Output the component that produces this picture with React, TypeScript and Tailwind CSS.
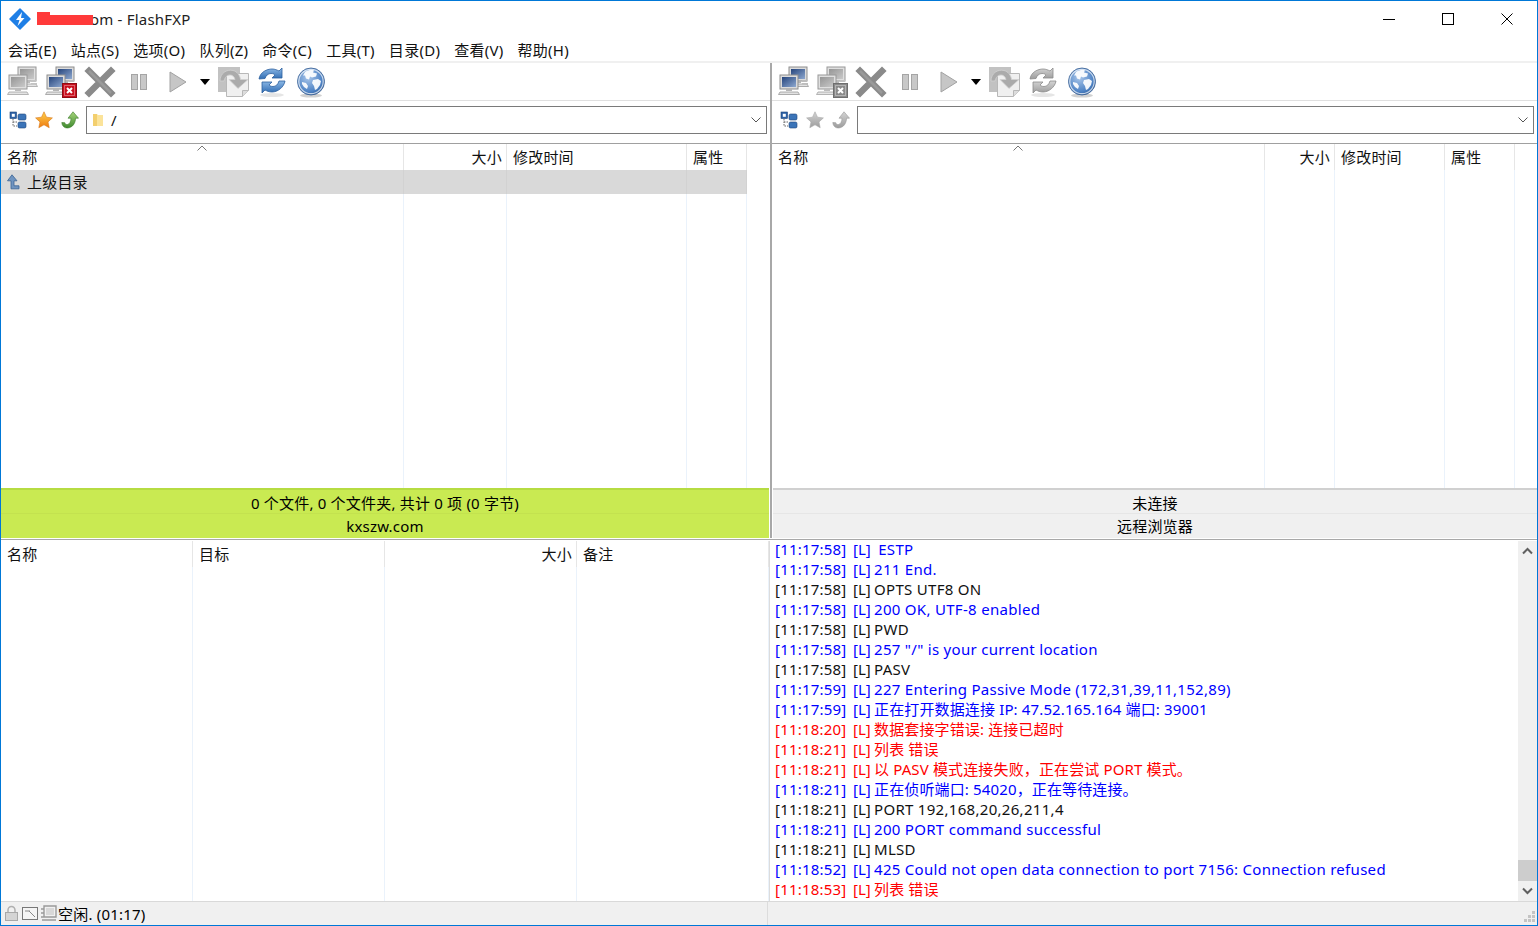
import React from "react";

const FONT = "font-['Noto_Sans','Noto_Sans_CJK_SC',sans-serif]";

function Defs() {
  return (
    <svg width="0" height="0" className="absolute">
      <defs>
        <linearGradient id="scr" x1="0" y1="0" x2="1" y2="1">
          <stop offset="0" stopColor="#25447c" />
          <stop offset="1" stopColor="#8fa9d0" />
        </linearGradient>
        <linearGradient id="scrg" x1="0" y1="0" x2="1" y2="1">
          <stop offset="0" stopColor="#8a8a8a" />
          <stop offset="1" stopColor="#c4c4c4" />
        </linearGradient>
        <radialGradient id="globe" cx="0.4" cy="0.35" r="0.75">
          <stop offset="0" stopColor="#a9c6ea" />
          <stop offset="0.7" stopColor="#4d82c4" />
          <stop offset="1" stopColor="#24508f" />
        </radialGradient>
        <linearGradient id="blueA" x1="0" y1="0" x2="0" y2="1">
          <stop offset="0" stopColor="#8db9e6" />
          <stop offset="1" stopColor="#2f6cb3" />
        </linearGradient>
        <linearGradient id="grayA" x1="0" y1="0" x2="0" y2="1">
          <stop offset="0" stopColor="#d4d4d4" />
          <stop offset="1" stopColor="#9c9c9c" />
        </linearGradient>
        <linearGradient id="starO" x1="0" y1="0" x2="0" y2="1">
          <stop offset="0" stopColor="#ffd34d" />
          <stop offset="1" stopColor="#ee7a10" />
        </linearGradient>
        <linearGradient id="greenA" x1="0" y1="0" x2="0" y2="1">
          <stop offset="0" stopColor="#a5d47a" />
          <stop offset="1" stopColor="#3f8a2e" />
        </linearGradient>
      </defs>
    </svg>
  );
}

function Monitor({ x, y, color }: { x: number; y: number; color: boolean }) {
  return (
    <g transform={`translate(${x} ${y})`}>
      <rect x="0" y="0" width="18" height="14" fill="#dcdcdc" stroke="#8e8e8e" />
      <rect x="2" y="2" width="14" height="10" fill={color ? "url(#scr)" : "url(#scrg)"} />
      <rect x="6" y="14" width="6" height="2" fill="#b5b5b5" />
      <path d="M0 17h18l1.500 2.500H-1.500z" fill="#e2e2e2" stroke="#9a9a9a" strokeWidth="0.8" />
    </g>
  );
}

function Computers({ color, badge }: { color: boolean; badge?: "red" | "gray" }) {
  return (
    <svg width="32" height="32" viewBox="0 0 32 32">
      <g opacity={color ? 1 : 0.9}>
        <Monitor x={11} y={1} color={color} />
        <path d="M24 14h5v2h-5zM24 17h6v1.500h-6z" fill="#bdbdbd" />
        <Monitor x={2} y={9} color={color} />
      </g>
      {badge && (
        <g>
          <rect x="17.500" y="17.500" width="14" height="14" fill={badge === "red" ? "#c9101e" : "#8a8a8a"} stroke={badge === "red" ? "#8e0c14" : "#6e6e6e"} />
          <rect x="19.500" y="19.500" width="10" height="10" fill="none" stroke="#fff" strokeOpacity="0.35" />
          <path d="M22 22l5 5M27 22l-5 5" stroke="#fff" strokeWidth="2" />
        </g>
      )}
    </svg>
  );
}

function BigX() {
  return (
    <svg width="32" height="32" viewBox="0 0 32 32">
      <path d="M5 5l22 22M27 5L5 27" stroke="#8a8a8a" strokeWidth="6.500" strokeLinecap="square" />
      <path d="M5 5l22 22" stroke="#9a9a9a" strokeWidth="2.500" />
    </svg>
  );
}

function Pause() {
  return (
    <svg width="18" height="18" viewBox="0 0 18 18">
      <rect x="1.500" y="1.500" width="6" height="15" fill="#c8c8c8" stroke="#a5a5a5" />
      <rect x="10.500" y="1.500" width="6" height="15" fill="#c8c8c8" stroke="#a5a5a5" />
    </svg>
  );
}

function Play() {
  return (
    <svg width="18" height="22" viewBox="0 0 18 22">
      <path d="M1 1l16 10L1 21z" fill="#c6c6c6" stroke="#a2a2a2" />
    </svg>
  );
}

function Caret() {
  return (
    <svg width="10" height="6" viewBox="0 0 10 6">
      <path d="M0 0h10L5 6z" fill="#000" />
    </svg>
  );
}

function Transfer() {
  return (
    <svg width="32" height="32" viewBox="0 0 32 32">
      <rect x="1" y="1" width="22" height="25" fill="#c2c2c2" />
      <path d="M9.500 7.500h22v17l-6 6h-16z" fill="#f0f0f0" stroke="#b8b8b8" />
      <path d="M31.500 24.500h-6v6" fill="#dcdcdc" stroke="#b8b8b8" />
      <path d="M3 15C3 7 10 3 16 4.500c4 1 7 4.500 7.500 9H31l-10 9-9-9h6c-.5-2.500-2.500-4.500-5-4.500-3 0-5 2-6 6z" fill="#ababab" stroke="#d2d2d2" strokeWidth="0.8" />
    </svg>
  );
}

function Refresh({ color }: { color: boolean }) {
  const fill = color ? "url(#blueA)" : "url(#grayA)";
  const st = color ? "#2c5f9e" : "#8a8a8a";
  return (
    <svg width="30" height="32" viewBox="0 0 30 32">
      <ellipse cx="15" cy="29" rx="12" ry="2" fill="#000" opacity="0.1" />
      <path d="M2 13C3 6 10 3 15 3c3 0 5 1 7 2l3-3v10H15l3-3c-1-1-2-1.500-4-1.500-3 0-5 2-6 5z" fill={fill} stroke={st} strokeWidth="0.8" />
      <path d="M28 15c-1 6-7 11-13 11-3 0-5-1-7-2l-3 3V16h10l-3 3c1 .8 2 1.500 4 1.500 3 0 5-2 6-5.500z" fill={fill} stroke={st} strokeWidth="0.8" />
    </svg>
  );
}

function Globe() {
  return (
    <svg width="30" height="32" viewBox="0 0 30 32" className="mt-[2px]">
      <ellipse cx="15" cy="28.500" rx="11" ry="2" fill="#000" opacity="0.18" />
      <circle cx="15" cy="14.500" r="13.500" fill="url(#globe)" stroke="#3a5f92" strokeWidth="0.8" />
      <circle cx="15" cy="14.500" r="12.200" fill="none" stroke="#fff" strokeOpacity="0.7" strokeWidth="1.200" />
      <path d="M9 5c3-2 7-2.500 9-1.500l-1 2 4 1-1 3-4 1-2-1-1 3-3-1-1-3-2 0zM17 13l5-1 3 2-1 4-3 4-2 1-1-4-2-3zM6 15l4 1 2 3-1 3-3-2-2-3z" fill="#fff" opacity="0.92" />
    </svg>
  );
}

function Tree() {
  return (
    <svg width="18" height="18" viewBox="0 0 18 18">
      <path d="M4 8v7h4M4 11h4" stroke="#666" strokeDasharray="1.500 1" fill="none" />
      <rect x="1" y="1" width="6.500" height="6.500" fill="#2d62a6" stroke="#1f4578" strokeWidth="0.6" />
      <rect x="2.800" y="2.800" width="3" height="3" fill="#fff" />
      <rect x="9" y="3" width="8" height="6" rx="1.500" fill="#3b74b8" stroke="#1f4578" strokeWidth="0.6" />
      <rect x="9" y="11" width="8" height="6" rx="1.500" fill="#3b74b8" stroke="#1f4578" strokeWidth="0.6" />
    </svg>
  );
}

function Star({ color }: { color: boolean }) {
  return (
    <svg width="18" height="18" viewBox="0 0 18 18">
      <path
        d="M9 .8l2.500 5.400 5.900.7-4.400 4 1.200 5.800L9 13.800l-5.200 2.900L5 10.900.6 6.900l5.900-.7z"
        fill={color ? "url(#starO)" : "url(#grayA)"}
        stroke={color ? "#d8791a" : "#aaa"}
        strokeWidth="0.6"
      />
    </svg>
  );
}

function BackArrow({ color }: { color: boolean }) {
  return (
    <svg width="18" height="18" viewBox="0 0 18 18">
      <path
        d="M12 .8l5.500 6.400h-3c0 5-3 9.500-8 9.800C3.500 17.100 1 15 .8 11.500l3 .2c.3 1.300 1.300 2 2.700 1.800 2-.3 3.500-3 3.500-6.300H7z"
        fill={color ? "url(#greenA)" : "url(#grayA)"}
        stroke={color ? "#3a7a2a" : "#999"}
        strokeWidth="0.6"
      />
    </svg>
  );
}

function Chevron({ className, color = "#555" }: { className?: string; color?: string }) {
  return (
    <svg width="10" height="6" viewBox="0 0 10 6" className={className}>
      <path d="M.5.5L5 5 9.500.5" fill="none" stroke={color} strokeWidth="1" />
    </svg>
  );
}

function Toolbar({ left }: { left: boolean }) {
  return (
    <div className="h-[38px] flex items-center border-b border-[#e0e0e0]">
      <div className="w-[3px]" />
      <div className="w-[38px] flex justify-center"><Computers color={!left} /></div>
      <div className="w-[37px] flex justify-center"><Computers color={left} badge={left ? "red" : "gray"} /></div>
      <div className="w-[42px] flex justify-center"><BigX /></div>
      <div className="w-[36px] flex justify-center"><Pause /></div>
      <div className="w-[42px] flex justify-center"><Play /></div>
      <div className="w-[12px] flex justify-center"><Caret /></div>
      <div className="w-[44px] flex justify-center"><Transfer /></div>
      <div className="w-[34px] flex justify-center"><Refresh color={left} /></div>
      <div className="w-[44px] flex justify-center"><Globe /></div>
    </div>
  );
}

function AddressBar({ left }: { left: boolean }) {
  return (
    <div className="h-[43px] flex items-center border-b border-[#a0a0a0] pr-[3px] pb-[4px]">
      <div className="w-[8px]" />
      <div className="w-[26px] flex"><Tree /></div>
      <div className="w-[26px] flex"><Star color={left} /></div>
      <div className="w-[25px] flex"><BackArrow color={left} /></div>
      <div className="flex-1 h-[28px] border border-[#7a7a7a] flex items-center pl-[6px] pr-[5px]">
        {left && (
          <>
            <svg width="11" height="14" viewBox="0 0 11 14" className="mr-[7px]">
              <path d="M0 1h4l1 1h5v11H0z" fill="#fbe39a" />
              <path d="M0 1h4v12H0z" fill="#f3cf6e" />
            </svg>
            <span>/</span>
          </>
        )}
        <Chevron className="ml-auto" />
      </div>
    </div>
  );
}

type Col = { w: number; title: string; right?: boolean; cell?: React.ReactNode };

function Columns({ cols, highlight }: { cols: Col[]; highlight?: boolean }) {
  return (
    <div className="flex-1 flex min-h-0 min-w-0">
      {cols.map((c, i) => (
        <div key={i} className="flex flex-col shrink-0" style={{ width: c.w }}>
          <div className={`h-[26px] flex items-center px-[6px] border-r border-[#e6e6e6] ${c.right ? "justify-end pr-[4px]" : ""}`}>
            {c.title}
          </div>
          {highlight && (
            <div className="h-[24px] bg-[#d9d9d9] flex items-center border-r border-[#d2d2d2] whitespace-nowrap">
              {c.cell}
            </div>
          )}
          <div className="flex-1 border-r border-[#eaf2fb]" />
        </div>
      ))}
    </div>
  );
}

function UpArrow() {
  return (
    <svg width="14" height="16" viewBox="0 0 14 16" className="ml-[5px] mr-[7px]">
      <path d="M6 .8l5 6H8v5h5v3H5V6.800H1.500z" fill="#6f94c0" stroke="#3a6394" strokeWidth="0.8" />
    </svg>
  );
}

function StatusPair({ green, a, b }: { green: boolean; a: string; b: string }) {
  return (
    <div className={`h-[50px] flex flex-col items-center border-t-2 ${green ? "bg-[#c9ea52] border-[#b6dc42]" : "bg-[#f0f0f0] border-[#d0d0d0]"}`}>
      <div className={`h-[24px] w-full flex items-center justify-center pt-[2px] border-b ${green ? "border-[#c3e24f]" : "border-[#e6e6e6]"}`}>{a}</div>
      <div className="flex-1 flex items-center justify-center">{b}</div>
    </div>
  );
}

const LOG: [string, string, string][] = [
  ["b", "[11:17:58]", " ESTP"],
  ["b", "[11:17:58]", "211 End."],
  ["k", "[11:17:58]", "OPTS UTF8 ON"],
  ["b", "[11:17:58]", "200 OK, UTF-8 enabled"],
  ["k", "[11:17:58]", "PWD"],
  ["b", "[11:17:58]", '257 "/" is your current location'],
  ["k", "[11:17:58]", "PASV"],
  ["b", "[11:17:59]", "227 Entering Passive Mode (172,31,39,11,152,89)"],
  ["b", "[11:17:59]", "正在打开数据连接 IP: 47.52.165.164 端口: 39001"],
  ["r", "[11:18:20]", "数据套接字错误: 连接已超时"],
  ["r", "[11:18:21]", "列表 错误"],
  ["r", "[11:18:21]", "以 PASV 模式连接失败，正在尝试 PORT 模式。"],
  ["b", "[11:18:21]", "正在侦听端口: 54020，正在等待连接。"],
  ["k", "[11:18:21]", "PORT 192,168,20,26,211,4"],
  ["b", "[11:18:21]", "200 PORT command successful"],
  ["k", "[11:18:21]", "MLSD"],
  ["b", "[11:18:52]", "425 Could not open data connection to port 7156: Connection refused"],
  ["r", "[11:18:53]", "列表 错误"],
];

const MENU = ["会话(E)", "站点(S)", "选项(O)", "队列(Z)", "命令(C)", "工具(T)", "目录(D)", "查看(V)", "帮助(H)"];

export default function App() {
  return (
    <div className={`w-[1538px] h-[926px] border border-[#0078d7] bg-white flex flex-col overflow-hidden text-[15px] leading-[20px] tracking-[0.2px] text-[#111] ${FONT}`}>
      <Defs />
      {/* title bar */}
      <div className="h-[37px] shrink-0 flex items-center pl-[8px] pb-[2px]">
        <svg width="22" height="22" viewBox="0 0 22 22">
          <path d="M11 1l10 10-10 10L1 11z" fill="#1f7fe6" stroke="#1f7fe6" strokeWidth="1.500" strokeLinejoin="round" />
          <path d="M13 4L7 12h3.500L8.500 18 15.500 10H12z" fill="#fff" />
        </svg>
        <span className="relative w-[56px] h-[10px] bg-[#ff3a3a] ml-[6px] mt-[3px] shrink-0">
          <span className="absolute left-0 top-[-3px] w-[13px] h-[3px] bg-[#ff3a3a]" />
        </span>
        <span className="ml-[-3px] text-[#222] whitespace-pre">om - FlashFXP</span>
        <div className="ml-auto flex items-center mr-[1px]">
          <div className="w-[59px] flex justify-center">
            <svg width="12" height="12" viewBox="0 0 12 12"><path d="M0 6.500h12" stroke="#000" /></svg>
          </div>
          <div className="w-[59px] flex justify-center">
            <svg width="12" height="12" viewBox="0 0 12 12"><rect x=".5" y=".5" width="11" height="11" fill="none" stroke="#000" /></svg>
          </div>
          <div className="w-[59px] flex justify-center">
            <svg width="12" height="12" viewBox="0 0 12 12"><path d="M.5.5l11 11M11.500.5l-11 11" stroke="#000" /></svg>
          </div>
        </div>
      </div>
      {/* menu */}
      <div className="h-[23px] shrink-0 flex items-center pl-[7px] gap-[14px] pt-[1px] whitespace-nowrap tracking-[0.27px]">
        {MENU.map((m) => (
          <span key={m}>{m}</span>
        ))}
      </div>
      <div className="h-[2px] shrink-0 bg-[#f0f0f0]" />
      {/* browsers */}
      <div className="h-[425px] shrink-0 flex">
        <div className="w-[769px] shrink-0 flex flex-col">
          <Toolbar left={true} />
          <AddressBar left={true} />
          <div className="relative flex-1 flex min-h-0">
            <Chevron className="absolute left-[196px] top-[1px] rotate-180" color="#777" />
            <Columns
              highlight
              cols={[
                { w: 403, title: "名称", cell: <><UpArrow /><span>上级目录</span></> },
                { w: 103, title: "大小", right: true },
                { w: 180, title: "修改时间" },
                { w: 60, title: "属性" },
              ]}
            />
          </div>
        </div>
        <div className="w-[2px] shrink-0 bg-[#a8a8a8]" />
        <div className="flex-1 min-w-0 flex flex-col">
          <Toolbar left={false} />
          <AddressBar left={false} />
          <div className="relative flex-1 flex min-h-0">
            <Chevron className="absolute left-[241px] top-[1px] rotate-180" color="#777" />
            <Columns
              cols={[
                { w: 493, title: "名称" },
                { w: 70, title: "大小", right: true },
                { w: 110, title: "修改时间" },
                { w: 70, title: "属性" },
              ]}
            />
          </div>
        </div>
      </div>
      {/* status pair */}
      <div className="h-[50px] shrink-0 flex">
        <div className="w-[768px] shrink-0 text-black"><StatusPair green a="0 个文件, 0 个文件夹, 共计 0 项 (0 字节)" b="kxszw.com" /></div>
        <div className="w-[1px] shrink-0 bg-white" />
        <div className="w-[2px] shrink-0 bg-[#a8a8a8]" />
        <div className="flex-1 min-w-0 text-black pl-[1px] bg-white"><StatusPair green={false} a="未连接" b="远程浏览器" /></div>
      </div>
      <div className="h-[3px] shrink-0 bg-[#a8a8a8] border-y border-white" />
      {/* queue + log */}
      <div className="flex-1 min-h-0 flex">
        <div className="w-[768px] shrink-0 flex border-r border-[#dcdcdc] box-content">
          <Columns
            cols={[
              { w: 192, title: "名称" },
              { w: 192, title: "目标" },
              { w: 192, title: "大小", right: true },
              { w: 192, title: "备注" },
            ]}
          />
        </div>
        <div className="flex-1 min-w-0 pl-[5px] overflow-hidden whitespace-pre -mt-[2px]">
          {LOG.map(([c, t, m], i) => (
            <div key={i} className={`h-[20px] flex ${c === "b" ? "text-[#0000ff]" : c === "r" ? "text-[#ff0000]" : "text-[#111]"}`}>
              <span className="w-[78px] shrink-0">{t}</span>
              <span className="w-[21px] shrink-0 tracking-[0px]">[L]</span>
              <span className={/[^\x00-\x7f]/.test(m) ? "tracking-[0.14px]" : "tracking-[0.3px]"}>{m}</span>
            </div>
          ))}
        </div>
        <div className="w-[19px] shrink-0 bg-[#f0f0f0] flex flex-col items-center">
          <div className="h-[20px] flex items-center justify-center">
            <svg width="11" height="8" viewBox="0 0 11 8"><path d="M1 6.500l4.500-4.500L10 6.500" fill="none" stroke="#606060" strokeWidth="2" /></svg>
          </div>
          <div className="flex-1" />
          <div className="w-full h-[21px] bg-[#cdcdcd]" />
          <div className="h-[20px] flex items-center justify-center">
            <svg width="11" height="8" viewBox="0 0 11 8"><path d="M1 1.500L5.500 6 10 1.500" fill="none" stroke="#606060" strokeWidth="2" /></svg>
          </div>
        </div>
      </div>
      {/* status bar */}
      <div className="h-[24px] shrink-0 bg-[#f0f0f0] border-t border-[#d9d9d9] flex items-center text-black">
        <div className="w-[767px] flex items-center border-r border-[#dcdcdc] h-full pl-[3px]">
          <svg width="15" height="17" viewBox="0 0 15 17">
            <path d="M4 8V5a3.500 3.500 0 017 0v3" fill="none" stroke="#b0b0b0" strokeWidth="1.500" />
            <rect x="1.500" y="7.500" width="12" height="8" fill="#d4d4d4" stroke="#a8a8a8" />
          </svg>
          <svg width="17" height="14" viewBox="0 0 17 14" className="ml-[3px]">
            <rect x=".5" y=".5" width="15" height="12" fill="#f4f4f4" stroke="#777" />
            <path d="M3 4h5M7 4l6 6" stroke="#888" />
          </svg>
          <svg width="17" height="17" viewBox="0 0 17 17" className="ml-[1px]">
            <path d="M4 1h12v11H4zM1 4h3M1 8h3M1 12h3M2 15h14" fill="none" stroke="#999" strokeWidth="1.400" />
            <rect x="6" y="3" width="8" height="7" fill="#d8d8d8" />
          </svg>
          <span className="ml-[1px] whitespace-pre">空闲. (01:17)</span>
        </div>
        <div className="ml-auto mr-[2px] self-end mb-[2px]">
          <svg width="12" height="12" viewBox="0 0 12 12">
            <path d="M9 0h3v3H9zM5 4h3v3H5zM9 4h3v3H9zM1 8h3v3H1zM5 8h3v3H5zM9 8h3v3H9z" fill="#c4c4c4" />
          </svg>
        </div>
      </div>
    </div>
  );
}
